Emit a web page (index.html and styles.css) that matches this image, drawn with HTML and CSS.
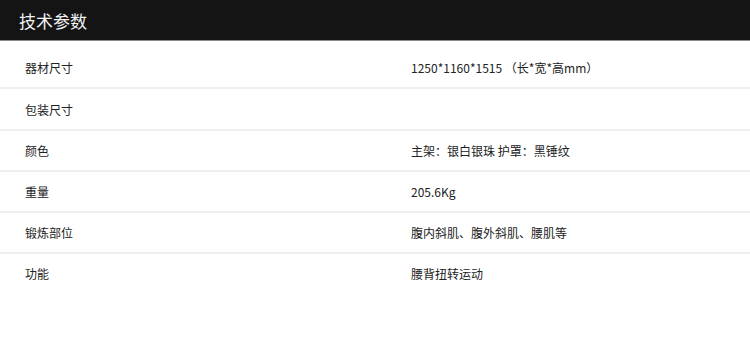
FILE: index.html
```html
<!DOCTYPE html>
<html lang="zh-CN">
<head>
<meta charset="utf-8">
<title>技术参数</title>
<link rel="stylesheet" href="styles.css">
</head>
<body>
<div class="header"><h2 class="title">技术参数</h2></div>
<div class="specs">
  <div class="row"><div class="label">器材尺寸</div><div class="value">1250*1160*1515 （长*宽*高mm）</div></div>
  <div class="row"><div class="label">包装尺寸</div><div class="value"></div></div>
  <div class="row"><div class="label">颜色</div><div class="value">主架：银白银珠 护罩：黑锤纹</div></div>
  <div class="row"><div class="label">重量</div><div class="value">205.6Kg</div></div>
  <div class="row"><div class="label">锻炼部位</div><div class="value">腹内斜肌、腹外斜肌、腰肌等</div></div>
  <div class="row"><div class="label">功能</div><div class="value">腰背扭转运动</div></div>
</div>
</body>
</html>
```
FILE: styles.css
```css
html, body {
  margin: 0;
  padding: 0;
  background: #fff;
  font-family: "Noto Sans CJK SC", "Noto Sans", sans-serif;
}
.header {
  height: 40px;
  background: #141414;
  border-bottom: 1px solid #8a8a8a;
  display: flex;
  align-items: center;
  padding-left: 19px;
}
.title {
  margin: 0;
  font-size: 17px;
  font-weight: normal;
  color: #f2f2f2;
  line-height: 1;
}
.specs {
  margin-top: 7px;
}
.row {
  display: grid;
  grid-template-columns: 386px 1fr;
  height: 39px;
  align-items: center;
  padding-left: 25px;
  border-bottom: 2px solid #efefef;
  font-size: 12px;
  color: #222;
}
.row:nth-child(2) {
  height: 40px;
}
.row:last-child {
  border-bottom: none;
}
```
